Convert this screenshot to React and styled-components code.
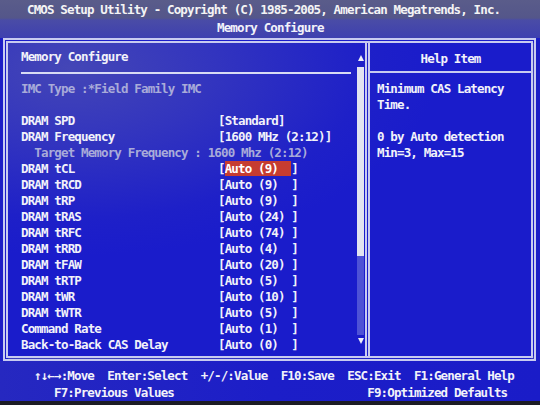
import React from 'react';
import styled, { createGlobalStyle } from 'styled-components';

const GlobalStyle = createGlobalStyle`
  html, body {
    margin: 0;
    padding: 0;
    background: #1c1c24;
  }
  body {
    width: 540px;
    height: 405px;
    overflow: hidden;
  }
`

const Screen = styled.div`
  width: 540px;
  height: 401px;
  display: flex;
  flex-direction: column;
  font-family: "DejaVu Sans Mono", "Liberation Mono", monospace;
  font-weight: bold;
  font-size: 12.5px;
  letter-spacing: -0.86px;
  color: #f2f2fa;
  background: #1c1ec6;
  overflow: hidden;
`

const Header = styled.header`
  height: 38px;
  background: linear-gradient(180deg, #5a5c8a 0px, #54568a 18px, #4a4ca6 20px, #3e40b0 38px);
`
const TitleLine = styled.div`
  height: 20px;
  line-height: 20px;
  padding-left: 27px;
  white-space: pre;
  color: #f4f4f4;
`
const SubTitle = styled.div`
  height: 18px;
  line-height: 16px;
  padding-left: 217px;
  white-space: pre;
`

const Frame = styled.main`
  height: 315px;
  margin: 0 4px 0 3px;
  border: 5px double #c8cbf0;
  display: flex;
  background: radial-gradient(ellipse 70% 60% at 12% 8%, #4446b6 0%, #3234bf 40%, #1e20c8 80%, #1a1ccb 100%);
`

const LeftPanel = styled.section`
  width: 357px;
  display: flex;
`
const Content = styled.div`
  flex: 1;
  padding: 6px 6px 0 13px;
`
const Row = styled.div`
  height: 16px;
  line-height: 16px;
  white-space: pre;
  color: ${p => (p.$dim ? '#a9abd9' : '#f2f2fa')};
`
const Rule = styled.div`
  height: 2px;
  margin: 7px 0;
  background: #d8dbf4;
`
const Item = styled.div`
  display: grid;
  grid-template-columns: 197px 1fr;
  height: 16px;
  line-height: 16px;
  white-space: pre;
`
const Highlight = styled.span`
  display: inline-block;
  height: 15px;
  line-height: 15px;
  background: #c63c30;
  color: #ffffff;
`

const ScrollBar = styled.div`
  width: 7px;
  margin-right: 1px;
  display: flex;
  flex-direction: column;
  align-items: center;
`
const Arrow = styled.div`
  width: 0;
  height: 0;
  border-left: 3.5px solid transparent;
  border-right: 3.5px solid transparent;
  ${p => (p.$down
    ? 'border-top: 6px solid #f0f0f8; margin: 3px 0 12px;'
    : 'border-bottom: 6px solid #f0f0f8; margin: 12px 0 6px;')}
`
const Thumb = styled.div`
  width: 7px;
  height: 189px;
  background: #e2e4f0;
`
const Track = styled.div`
  width: 7px;
  flex: 1;
  background: #4e52d6;
`

const RightPanel = styled.aside`
  flex: 1;
  border-left: 5px double #c8cbf0;
  display: flex;
  flex-direction: column;
`
const HelpHeader = styled.div`
  height: 30px;
  box-sizing: border-box;
  padding-top: 8px;
  line-height: 16px;
  text-align: center;
  border-bottom: 2px solid #c8cbf0;
`
const HelpText = styled.div`
  padding: 8px 0 0 7px;
  line-height: 16px;
  white-space: pre;
`

const Footer = styled.footer`
  flex: 1;
  padding: 6px 0 0 34px;
  line-height: 17px;
  white-space: pre;
  background: linear-gradient(90deg, #2628c0 0%, #1c1ec8 50%, #1a1cc8 100%);
`

const items = [
  { label: 'DRAM SPD', value: '[Standard]' },
  { label: 'DRAM Frequency', value: '[1600 MHz (2:12)]' },
  { target: '  Target Memory Frequency : 1600 Mhz (2:12)' },
  { label: 'DRAM tCL', value: 'Auto (9)  ', selected: true },
  { label: 'DRAM tRCD', value: '[Auto (9)  ]' },
  { label: 'DRAM tRP', value: '[Auto (9)  ]' },
  { label: 'DRAM tRAS', value: '[Auto (24) ]' },
  { label: 'DRAM tRFC', value: '[Auto (74) ]' },
  { label: 'DRAM tRRD', value: '[Auto (4)  ]' },
  { label: 'DRAM tFAW', value: '[Auto (20) ]' },
  { label: 'DRAM tRTP', value: '[Auto (5)  ]' },
  { label: 'DRAM tWR', value: '[Auto (10) ]' },
  { label: 'DRAM tWTR', value: '[Auto (5)  ]' },
  { label: 'Command Rate', value: '[Auto (1)  ]' },
  { label: 'Back-to-Back CAS Delay', value: '[Auto (0)  ]' },
];

const help = 'Minimum CAS Latency\nTime.\n\n0 by Auto detection\nMin=3, Max=15';

const footerLines = [
  '↑↓←→:Move  Enter:Select  +/-/:Value  F10:Save  ESC:Exit  F1:General Help',
  '   F7:Previous Values                             F9:Optimized Defaults',
];

export default function App() {
  return (
    <Screen>
      <GlobalStyle />
      <Header>
        <TitleLine>CMOS Setup Utility - Copyright (C) 1985-2005, American Megatrends, Inc.</TitleLine>
        <SubTitle>Memory Configure</SubTitle>
      </Header>
      <Frame>
        <LeftPanel>
          <Content>
            <Row>Memory Configure</Row>
            <Rule />
            <Row $dim>IMC Type :*Field Family IMC</Row>
            <Row />
            {items.map((it, i) =>
              it.target ? (
                <Row key={i} $dim>{it.target}</Row>
              ) : (
                <Item key={i}>
                  <span>{it.label}</span>
                  {it.selected
                    ? <span>[<Highlight>{it.value}</Highlight>]</span>
                    : <span>{it.value}</span>}
                </Item>
              )
            )}
          </Content>
          <ScrollBar>
            <Arrow />
            <Thumb />
            <Track />
            <Arrow $down />
          </ScrollBar>
        </LeftPanel>
        <RightPanel>
          <HelpHeader>Help Item</HelpHeader>
          <HelpText>{help}</HelpText>
        </RightPanel>
      </Frame>
      <Footer>
        {footerLines.map(l => <div key={l}>{l}</div>)}
      </Footer>
    </Screen>
  );
}
